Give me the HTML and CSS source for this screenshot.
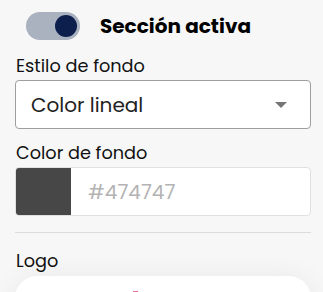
FILE: index.html
```html
<!DOCTYPE html>
<html lang="es">
<head>
<meta charset="utf-8">
<link rel="stylesheet" href="styles.css">
</head>
<body>
<div class="panel">
  <div class="toggle-row">
    <span class="toggle"><span class="knob"></span></span>
    <span class="toggle-label">Sección activa</span>
  </div>
  <div class="field">
    <label class="label">Estilo de fondo</label>
    <div class="select">
      <span class="select-value">Color lineal</span>
      <span class="caret"></span>
    </div>
  </div>
  <div class="field">
    <label class="label">Color de fondo</label>
    <div class="color-input">
      <span class="swatch"></span>
      <span class="placeholder">#474747</span>
    </div>
  </div>
  <hr class="divider">
  <div class="field">
    <label class="label">Logo</label>
    <div class="card"><span class="logo-dot"></span></div>
  </div>
</div>
</body>
</html>
```

FILE: styles.css
```css
html, body {
  margin: 0;
  padding: 0;
  background: #f7f7f7;
  overflow: hidden;
  height: 292px;
}
body {
  font-family: "Poppins", "Inter", "Open Sans", sans-serif;
  color: #111;
}
.panel {
  display: flex;
  flex-direction: column;
  padding: 12px 12px 0 15px;
}
.toggle-row {
  display: flex;
  align-items: center;
  gap: 20px;
  padding-left: 11px;
  height: 28px;
  margin-bottom: 2px;
}
.toggle {
  width: 54px;
  height: 28px;
  border-radius: 14px;
  background: #aab1bf;
  display: flex;
  align-items: center;
  justify-content: flex-end;
  padding: 0 3px;
  box-sizing: border-box;
}
.knob {
  width: 22px;
  height: 22px;
  border-radius: 50%;
  background: #0c1f4d;
}
.toggle-label {
  font-size: 20px;
  font-weight: 700;
  color: #000;
}
.field {
  display: flex;
  flex-direction: column;
}
.label {
  font-size: 17.7px;
  line-height: 24px;
  margin: 12px 0 2px 1px;
  color: #111;
}
.select {
  height: 49px;
  box-sizing: border-box;
  border: 1px solid #9e9e9e;
  border-radius: 4px;
  background: #fff;
  display: flex;
  align-items: center;
  justify-content: space-between;
  padding: 0 23px 0 15px;
}
.select-value {
  font-size: 20px;
  color: #222;
}
.caret {
  width: 0;
  height: 0;
  border-left: 6px solid transparent;
  border-right: 6px solid transparent;
  border-top: 6px solid #757575;
}
.color-input {
  height: 49px;
  box-sizing: border-box;
  border: 1px solid #e0e0e0;
  border-radius: 4px;
  background: #fff;
  display: flex;
  align-items: center;
  overflow: hidden;
}
.swatch {
  width: 55px;
  align-self: stretch;
  background: #474747;
}
.placeholder {
  font-size: 20px;
  color: #b3b3b3;
  margin-left: 17px;
}
.divider {
  border: 0;
  border-top: 1px solid #dcdcdc;
  margin: 16px 0 4px 0;
}
.card {
  height: 60px;
  margin-top: 1px;
  background: #fff;
  border-radius: 22px;
  box-shadow: 0 0 28px rgba(0, 0, 0, 0.06);
  position: relative;
}
.logo-dot {
  position: absolute;
  left: 118px;
  top: 15px;
  width: 5px;
  height: 2px;
  background: #f06c9b;
}
```
